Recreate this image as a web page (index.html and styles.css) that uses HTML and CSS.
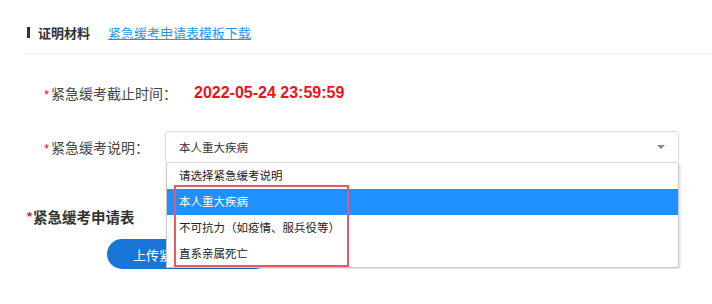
FILE: index.html
```html
<!DOCTYPE html>
<html lang="zh-CN">
<head>
    <meta charset="UTF-8">
    <meta name="viewport" content="width=device-width, initial-scale=1.0">
    <title>证明材料</title>
    <link rel="stylesheet" href="styles.css">
</head>
<body>
    <div class="page">
        <div class="section-title">
            <span class="bar"></span>
            <span class="title">证明材料</span>
            <a class="download" href="#">紧急缓考申请表模板下载</a>
        </div>

        <div class="form-row">
            <span class="label"><i class="star">*</i>紧急缓考截止时间：</span>
            <span class="deadline">2022-05-24 23:59:59</span>
        </div>

        <div class="form-row">
            <span class="label"><i class="star">*</i>紧急缓考说明：</span>
            <div class="select">
                <div class="select-box">
                    <span>本人重大疾病</span>
                    <span class="arrow"></span>
                </div>
                <ul class="options">
                    <li>请选择紧急缓考说明</li>
                    <li class="active">本人重大疾病</li>
                    <li>不可抗力（如疫情、服兵役等）</li>
                    <li>直系亲属死亡</li>
                </ul>
                <div class="mark"></div>
            </div>
        </div>

        <h3 class="sub-title"><i class="star">*</i>紧急缓考申请表</h3>
        <button class="upload">上传紧急缓考申请表</button>
    </div>
</body>
</html>
```

FILE: styles.css
```css
body {
    margin: 0;
    background-color: #fff;
    color: #333;
    font-family: "Liberation Sans", "Noto Sans CJK SC", sans-serif;
}

.page {
    padding: 24px 0 0 27px;
}

.section-title {
    display: flex;
    align-items: center;
    height: 16px;
    padding-bottom: 13px;
    border-bottom: 1px solid #eee;
}

.bar {
    width: 3px;
    height: 11px;
    background-color: #333;
    margin-right: 8px;
}

.title {
    font-size: 13px;
    font-weight: bold;
    color: #333;
}

.download {
    margin-left: 18px;
    font-size: 13px;
    color: #1f97e6;
}

.star {
    font-style: normal;
    color: #e0151c;
    font-size: 13px;
    margin-right: 2px;
}

.form-row {
    display: flex;
    align-items: center;
    height: 32px;
    margin-top: 23px;
    padding-left: 17px;
}

.form-row + .form-row {
    margin-top: 22px;
}

.label {
    font-size: 14px;
    color: #444;
    width: 121px;
    white-space: nowrap;
}

.deadline {
    margin-left: 29px;
    font-size: 16px;
    font-weight: bold;
    color: #f0111a;
}

.select {
    position: relative;
    width: 514px;
}

.select-box {
    display: flex;
    align-items: center;
    justify-content: space-between;
    box-sizing: border-box;
    height: 32px;
    padding: 0 13px;
    border: 1px solid #ddd;
    border-radius: 3px;
    font-size: 11.5px;
    color: #333;
}

.arrow {
    width: 0;
    height: 0;
    border-left: 4.5px solid transparent;
    border-right: 4.5px solid transparent;
    border-top: 4px solid #8a8a8a;
}

.options {
    position: absolute;
    top: 32px;
    left: 1px;
    right: 0;
    z-index: 2;
    margin: 0;
    padding: 0;
    list-style: none;
    background-color: #fff;
    border: 1px solid #c8c8c8;
    border-top: none;
    box-shadow: 1px 1px 3px rgba(0, 0, 0, 0.15);
}

.options li {
    height: 26px;
    line-height: 26px;
    padding-left: 12px;
    font-size: 11.5px;
    color: #222;
}

.options li.active {
    background-color: #1e90ff;
    color: #fff;
}

.mark {
    position: absolute;
    top: 54px;
    left: 9px;
    width: 175px;
    height: 82px;
    box-sizing: border-box;
    border: 2px solid #ea5862;
    z-index: 3;
}

.sub-title {
    display: flex;
    align-items: center;
    margin: 43px 0 0;
    height: 20px;
    font-size: 14.5px;
    font-weight: bold;
    color: #333;
}

.sub-title .star {
    margin-right: 1px;
}

.upload {
    display: block;
    margin: 13px 0 0 80px;
    width: 164px;
    height: 30px;
    padding: 0 0 0 26px;
    text-align: left;
    border: none;
    border-radius: 15px;
    background-color: #1976d8;
    color: #fff;
    font-family: inherit;
    font-size: 13px;
}
```
